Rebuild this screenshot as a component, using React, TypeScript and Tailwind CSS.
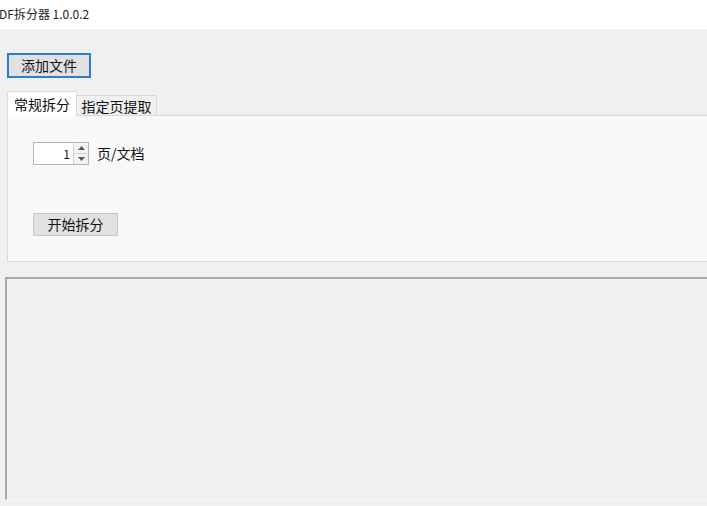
import { useState } from 'react';

const font = { fontFamily: '"Microsoft YaHei", "Noto Sans CJK SC", "Noto Sans", sans-serif' };

function SpinBox({ value, onChange }: { value: number; onChange: (v: number) => void }) {
  return (
    <div className="flex h-[23px] w-[56px] border border-[#b4b4b4] bg-white">
      <div className="flex flex-1 items-center justify-end pr-[3px] text-[12px] text-[#111]">{value}</div>
      <div className="flex w-[15px] flex-col border-l border-[#d0d0d0] bg-[#f4f4f4]">
        <button
          onClick={() => onChange(value + 1)}
          className="flex flex-1 items-center justify-center border-b border-[#d0d0d0]"
        >
          <svg width="7" height="4" viewBox="0 0 7 4">
            <path d="M0 4 L3.5 0 L7 4 Z" fill="#555" />
          </svg>
        </button>
        <button
          onClick={() => onChange(Math.max(1, value - 1))}
          className="flex flex-1 items-center justify-center"
        >
          <svg width="7" height="4" viewBox="0 0 7 4">
            <path d="M0 0 L3.5 4 L7 0 Z" fill="#555" />
          </svg>
        </button>
      </div>
    </div>
  );
}

export default function App() {
  const [tab, setTab] = useState(0);
  const [pages, setPages] = useState(1);

  return (
    <div className="flex h-[506px] w-[707px] flex-col overflow-hidden bg-[#f0f0f0] text-[#111]" style={font}>
      <div className="flex h-[29px] shrink-0 items-start bg-white pt-[5px] text-[12px] text-[#222]">
        <span className="-ml-[1px]">DF拆分器 1.0.0.2</span>
      </div>

      <div className="ml-[7px] mt-[24px] flex h-[25px] w-[84px] items-center justify-center border-2 border-[#2a7fd4] bg-[#e1e1e1] text-[14px]">
        添加文件
      </div>

      <div className="ml-[7px] mt-[12px] flex h-[26px] items-end">
        <button
          onClick={() => setTab(0)}
          className={
            tab === 0
              ? 'relative z-10 -mb-px flex h-[26px] w-[70px] items-center justify-center border border-b-0 border-[#d9d9d9] bg-white text-[14px]'
              : 'flex h-[21px] w-[70px] items-center justify-center border border-[#d9d9d9] bg-[#f0f0f0] text-[14px]'
          }
        >
          常规拆分
        </button>
        <button
          onClick={() => setTab(1)}
          className={
            tab === 1
              ? 'relative z-10 -mb-px flex h-[26px] w-[80px] items-center justify-center border border-b-0 border-[#d9d9d9] bg-white text-[14px]'
              : 'flex h-[21px] w-[80px] items-center justify-center border border-b-0 border-l-0 border-[#d9d9d9] bg-[#f0f0f0] text-[14px]'
          }
        >
          指定页提取
        </button>
      </div>

      <div className="ml-[7px] -mt-px h-[147px] shrink-0 border border-r-0 border-[#d9d9d9] bg-[#f9f9f9] pl-[25px] pt-[26px]">
        {tab === 0 ? (
          <>
            <div className="flex items-center gap-[8px]">
              <SpinBox value={pages} onChange={setPages} />
              <span className="text-[14px]">页/文档</span>
            </div>
            <button className="mt-[48px] flex h-[23px] w-[85px] items-center justify-center border border-[#c8c8c8] bg-[#e1e1e1] text-[14px]">
              开始拆分
            </button>
          </>
        ) : null}
      </div>

      <div className="ml-[5px] mt-[15px] h-[223px] shrink-0 border-l-2 border-t-2 border-b border-[#a8a8a8] border-b-[#fbfbfb] bg-[#f0f0f0]" />
    </div>
  );
}
